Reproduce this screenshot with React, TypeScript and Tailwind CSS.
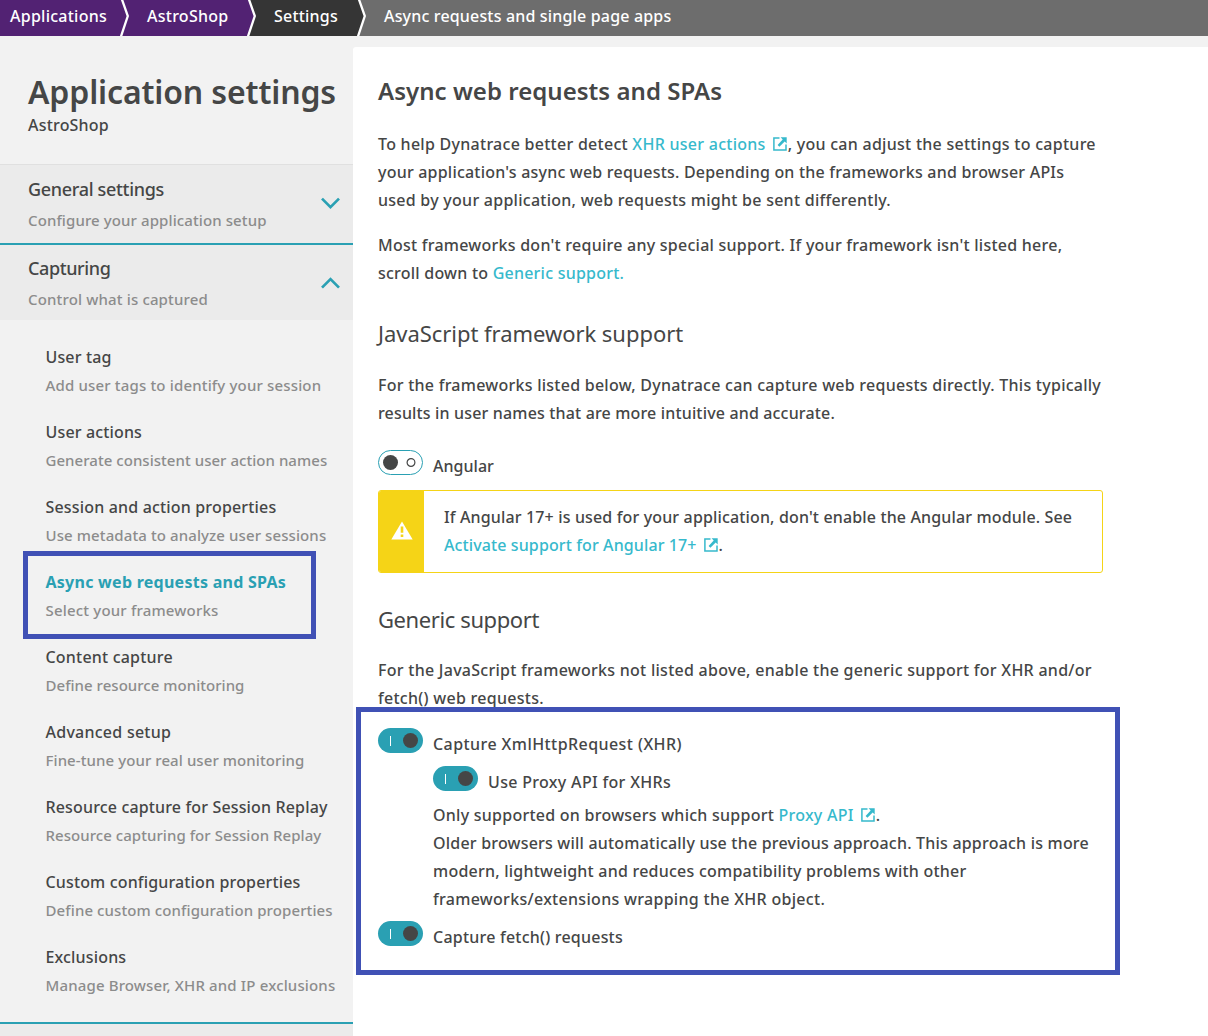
import { clsx } from "clsx";
import type { ReactNode } from "react";

type Item = { title: string; sub: string; titleTrack: string; subTrack: string; active?: boolean };

const items: Item[] = [
  { title: "User tag", sub: "Add user tags to identify your session", titleTrack: "tracking-[0.14px]", subTrack: "tracking-[0.16px]" },
  { title: "User actions", sub: "Generate consistent user action names", titleTrack: "tracking-[0.15px]", subTrack: "tracking-[0.04px]" },
  { title: "Session and action properties", sub: "Use metadata to analyze user sessions", titleTrack: "tracking-[0.17px]", subTrack: "tracking-[0.1px]" },
  { title: "Async web requests and SPAs", sub: "Select your frameworks", titleTrack: "tracking-[0.26px]", subTrack: "tracking-[0.18px]", active: true },
  { title: "Content capture", sub: "Define resource monitoring", titleTrack: "tracking-[0.2px]", subTrack: "tracking-[0.03px]" },
  { title: "Advanced setup", sub: "Fine-tune your real user monitoring", titleTrack: "tracking-[0.25px]", subTrack: "tracking-[0.08px]" },
  { title: "Resource capture for Session Replay", sub: "Resource capturing for Session Replay", titleTrack: "tracking-[0.15px]", subTrack: "tracking-[0.05px]" },
  { title: "Custom configuration properties", sub: "Define custom configuration properties", titleTrack: "tracking-[0.15px]", subTrack: "tracking-[0.1px]" },
  { title: "Exclusions", sub: "Manage Browser, XHR and IP exclusions", titleTrack: "tracking-[0.16px]", subTrack: "tracking-[0.15px]" },
];

function Separator({ left, right }: { left: string; right: string }) {
  return (
    <svg width="11" height="36" viewBox="0 0 11 36" className="block shrink-0">
      <rect width="11" height="36" fill={right} />
      <path d="M0 0H2L8 16L1 36H0Z" fill={left} />
      <path d="M1.8 -1L7.8 16L0.8 37" fill="none" stroke="#fff" strokeWidth="2.3" />
    </svg>
  );
}

function Chevron({ up }: { up?: boolean }) {
  return (
    <svg width="20" height="12" viewBox="0 0 20 12" className={clsx("block shrink-0", up ? "-mt-[2px]" : "-mt-[2px]")}>
      <path d={up ? "M2 10.6L10.5 2.1L19 10.6" : "M2 1.6L10.5 10.1L19 1.6"} fill="none" stroke="#2aa0b3" strokeWidth="2.7" />
    </svg>
  );
}

function ExternalIcon() {
  return (
    <svg width="15" height="14" viewBox="0 0 15 14" className="ml-[7px] inline-block align-[-1px]">
      <path d="M6.5 1H0.9V13H13V7.5" fill="none" stroke="currentColor" strokeWidth="1.5" />
      <path d="M7.6 0.3H13.7V6.4L11.7 4.4L6.4 9.7L4.6 7.9L9.7 2.4Z" fill="currentColor" />
    </svg>
  );
}

function Link({ children, external }: { children: ReactNode; external?: boolean }) {
  return (
    <a className="text-[#36b9cc]">
      {children}
      {external && <ExternalIcon />}
    </a>
  );
}

function Toggle({ on, label, track }: { on?: boolean; label: string; track: string }) {
  return (
    <div className="flex h-[25px]">
      <span
        className={clsx(
          "flex h-[25px] w-[45px] shrink-0 items-center justify-between rounded-full",
          on ? "bg-[#2aa0b3] pr-[5px] pl-3" : "border border-[#2aa0b3] bg-white pr-[6px] pl-1",
        )}
      >
        {on ? (
          <>
            <span className="h-[10px] w-px bg-white" />
            <span className="size-[15px] rounded-full bg-[#454646]" />
          </>
        ) : (
          <>
            <span className="size-[15px] rounded-full bg-[#454646]" />
            <svg width="10" height="10" viewBox="0 0 10 10" className="block">
              <circle cx="5" cy="4.5" r="3.9" fill="none" stroke="#454646" strokeWidth="1.2" />
            </svg>
          </>
        )}
      </span>
      <span className={clsx("mt-[2px] ml-[10px] leading-7 whitespace-nowrap", track)}>{label}</span>
    </div>
  );
}

function Line({ track, children }: { track: string; children: ReactNode }) {
  return <span className={clsx("block whitespace-nowrap", track)}>{children}</span>;
}

function SectionHeader({ title, sub, track, subTrack, up }: { title: string; sub: string; track: string; subTrack: string; up?: boolean }) {
  return (
    <div className={clsx("flex items-center justify-between bg-[#ebebeb] pr-[13px] pl-7", up ? "h-[75px] pt-[2px]" : "h-[79px] border-t border-[#e0e0e0]")}>
      <div>
        <div className={clsx("text-[18px] leading-7", track)}>{title}</div>
        <div className={clsx("mt-[3px] text-[15px] leading-7 text-[#8c8c8c]", subTrack)}>{sub}</div>
      </div>
      <Chevron up={up} />
    </div>
  );
}

export default function App() {
  return (
    <div className="flex h-[1036px] w-[1208px] flex-col overflow-hidden bg-[#f2f2f2] font-['Noto_Sans',sans-serif] text-base leading-7 font-medium text-[#454646]">
      <nav className="flex h-9 shrink-0 bg-[#6d6d6d] leading-8 whitespace-nowrap text-white">
        <div className="w-[120px] bg-[#522273] pl-[10px] tracking-[0.25px]">Applications</div>
        <Separator left="#522273" right="#522273" />
        <div className="w-[116px] bg-[#522273] pl-4 tracking-[0.26px]">AstroShop</div>
        <Separator left="#522273" right="#353535" />
        <div className="w-[99px] bg-[#353535] pl-4 tracking-[0.21px]">Settings</div>
        <Separator left="#353535" right="#6d6d6d" />
        <div className="pl-4 tracking-[0.17px]">Async requests and single page apps</div>
      </nav>

      <div className="flex min-h-0 flex-1">
        <aside className="w-[353px] shrink-0 whitespace-nowrap">
          <div className="h-32 pt-[35px] pl-7">
            <h1 className="text-[32px] leading-[42px] font-semibold tracking-[-0.14px]">Application settings</h1>
            <div className="-mt-[2px] leading-7 tracking-[0.2px]">AstroShop</div>
          </div>
          <SectionHeader title="General settings" sub="Configure your application setup" track="tracking-[-0.32px]" subTrack="tracking-[0.1px]" />
          <div className="h-[2px] bg-[#2aa0b3]" />
          <SectionHeader title="Capturing" sub="Control what is captured" track="tracking-[-0.4px]" subTrack="tracking-[0.15px]" up />
          <ul className="flex flex-col gap-[19px] py-[23px] pl-[45.5px]">
            {items.map((item) => (
              <li key={item.title} className="relative h-14">
                {item.active && <div className="absolute -top-[17px] -left-[22.5px] h-[88px] w-[293px] border-5 border-[#4051b5]" />}
                <div className={clsx("leading-7", item.titleTrack, item.active && "font-bold text-[#2aa0b3]")}>{item.title}</div>
                <div className={clsx("text-[15px] leading-7 text-[#8c8c8c]", item.subTrack)}>{item.sub}</div>
              </li>
            ))}
          </ul>
          <div className="h-[14px] border-t-2 border-[#2aa0b3] bg-[#ebebeb]" />
        </aside>

        <main className="mt-[11px] flex-1 rounded-tl-[3px] bg-white pt-7 pl-[25px]">
          <h2 className="text-[24px] leading-8 font-semibold tracking-[0.03px]">Async web requests and SPAs</h2>
          <p className="mt-[23px]">
            <Line track="tracking-[0.27px]">
              To help Dynatrace better detect <Link external>XHR user actions</Link>, you can adjust the settings to capture
            </Line>
            <Line track="tracking-[0.21px]">your application's async web requests. Depending on the frameworks and browser APIs</Line>
            <Line track="tracking-[0.26px]">used by your application, web requests might be sent differently.</Line>
          </p>
          <p className="mt-[17px]">
            <Line track="tracking-[0.25px]">Most frameworks don't require any special support. If your framework isn't listed here,</Line>
            <Line track="tracking-[0.23px]">
              scroll down to <Link>Generic support.</Link>
            </Line>
          </p>
          <h3 className="mt-[30px] text-[22px] leading-8 font-normal tracking-[-0.04px]">JavaScript framework support</h3>
          <p className="mt-[22px]">
            <Line track="tracking-[0.255px]">For the frameworks listed below, Dynatrace can capture web requests directly. This typically</Line>
            <Line track="tracking-[0.16px]">results in user names that are more intuitive and accurate.</Line>
          </p>
          <div className="mt-[23px]">
            <Toggle label="Angular" track="tracking-[0.03px]" />
          </div>
          <div className="mt-[15px] flex h-[83px] w-[725px] overflow-hidden rounded-[3px] border border-[#f5d417]">
            <div className="flex w-[45px] shrink-0 items-center justify-center bg-[#f5d417]">
              <svg width="22" height="19" viewBox="0 0 22 19" className="-mt-[2px] block">
                <path d="M11 0.5L21.7 18.5H0.3Z" fill="#fff" />
                <path d="M9.7 5.5H12.3V11.8H9.7ZM9.7 13.4H12.3V16H9.7Z" fill="#f5d417" />
              </svg>
            </div>
            <div className="pt-3 pl-5">
              <Line track="tracking-[0.145px]">If Angular 17+ is used for your application, don't enable the Angular module. See</Line>
              <Line track="tracking-[0.11px]">
                <Link external>Activate support for Angular 17+</Link>.
              </Line>
            </div>
          </div>
          <h3 className="mt-[30px] text-[22px] leading-8 font-normal tracking-[-0.4px]">Generic support</h3>
          <p className="mt-[21px]">
            <Line track="tracking-[0.27px]">For the JavaScript frameworks not listed above, enable the generic support for XHR and/or</Line>
            <Line track="tracking-[0.28px]">fetch() web requests.</Line>
          </p>
          <div className="relative -mt-[5px] -ml-[22px] h-[268px] w-[764px] border-5 border-[#4051b5] pt-4 pl-[17px]">
            <Toggle on label="Capture XmlHttpRequest (XHR)" track="tracking-[0.43px]" />
            <div className="mt-[13px] pl-[55px]">
              <Toggle on label="Use Proxy API for XHRs" track="tracking-[0.32px]" />
              <p className="mt-[10px]">
                <Line track="tracking-[0.25px]">
                  Only supported on browsers which support <Link external>Proxy API</Link>.
                </Line>
                <Line track="tracking-[0.205px]">Older browsers will automatically use the previous approach. This approach is more</Line>
                <Line track="tracking-[0.23px]">modern, lightweight and reduces compatibility problems with other</Line>
                <Line track="tracking-[0.3px]">frameworks/extensions wrapping the XHR object.</Line>
              </p>
            </div>
            <div className="mt-2">
              <Toggle on label="Capture fetch() requests" track="tracking-[0.22px]" />
            </div>
          </div>
        </main>
      </div>
    </div>
  );
}
